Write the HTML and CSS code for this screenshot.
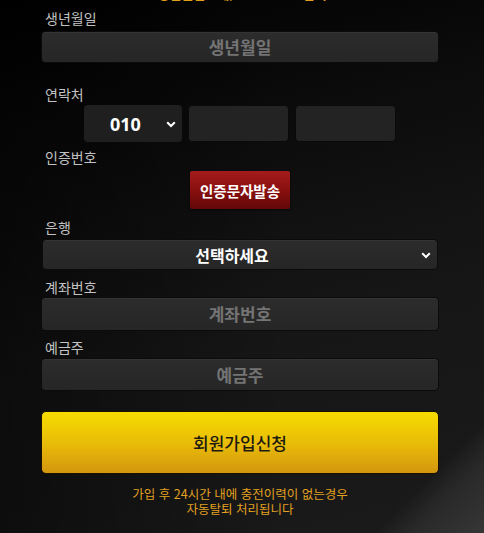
FILE: index.html
```html
<!DOCTYPE html>
<html lang="ko">
<head>
<meta charset="utf-8">
<title>회원가입</title>
<link rel="stylesheet" href="styles.css">
</head>
<body>
<div class="page">
  <p class="top-note">생년월일 - 예) 19900101 입력</p>
  <form class="form">
    <label class="label lb-birth">생년월일</label>
    <div class="field f-birth"><span class="ph">생년월일</span></div>

    <label class="label lb-phone">연락처</label>
    <div class="phone-row">
      <div class="phone-sel">
        <span class="sel-val">010</span>
        <svg class="chev" width="10" height="7" viewBox="0 0 10 7"><path d="M1.2 1.2 L5 5 L8.8 1.2" fill="none" stroke="#fff" stroke-width="2"/></svg>
      </div>
      <div class="phone-in"></div>
      <div class="phone-in"></div>
    </div>

    <label class="label lb-cert">인증번호</label>
    <button type="button" class="btn-red">인증문자발송</button>

    <label class="label lb-bank">은행</label>
    <div class="field f-bank">
      <span class="sel-text">선택하세요</span>
      <svg class="chev chev-bank" width="10" height="7" viewBox="0 0 10 7"><path d="M1.2 1.2 L5 5 L8.8 1.2" fill="none" stroke="#fff" stroke-width="2"/></svg>
    </div>

    <label class="label lb-acc">계좌번호</label>
    <div class="field f-acc"><span class="ph">계좌번호</span></div>

    <label class="label lb-owner">예금주</label>
    <div class="field f-owner"><span class="ph">예금주</span></div>

    <button type="button" class="btn-yellow">회원가입신청</button>

    <p class="notice"><span class="nl">가입 후 24시간 내에 충전이력이 없는경우</span><span class="nl">자동탈퇴 처리됩니다</span></p>
  </form>
</div>
</body>
</html>
```

FILE: styles.css
```css
* { box-sizing: border-box; }
html, body { margin: 0; padding: 0; }
body {
  width: 484px;
  height: 533px;
  overflow: hidden;
  font-family: "Noto Sans CJK KR", "Noto Sans", sans-serif;
  background:
    linear-gradient(135deg, rgba(255,255,255,0) 0%, rgba(255,255,255,0) 89%, rgba(255,255,255,0.07) 93%, rgba(255,255,255,0.12) 100%),
    linear-gradient(165deg, #000 0%, #0c0c0c 30%, #161616 60%, #1a1a1a 100%);
}
.page {
  width: 484px;
  height: 533px;
  overflow: hidden;
  background: linear-gradient(90deg, rgba(0,0,0,0.45) 0%, rgba(0,0,0,0) 60%);
}
.top-note {
  margin: -14px 0 0;
  text-align: center;
  color: #e0a01a;
  font-size: 13px;
  line-height: 16px;
  font-weight: 700;
}
.form {
  display: flex;
  flex-direction: column;
  padding: 0 45px 0 41px;
}
.label {
  display: block;
  padding-left: 4px;
  color: #c2c2c2;
  font-size: 14px;
  line-height: 20px;
}
.lb-birth { margin-top: 6px; }
.lb-phone { margin-top: 21px; }
.lb-cert { margin-top: 5px; }
.lb-bank { margin-top: 8px; }
.lb-acc { margin-top: 7px; }
.lb-owner { margin-top: 6px; }

.field {
  position: relative;
  width: 398px;
  display: flex;
  align-items: center;
  justify-content: center;
  background: linear-gradient(180deg, #2c2c2c 0%, #262626 100%);
  border: 1px solid #0b0b0b;
  border-radius: 4px;
  box-shadow: inset 0 1px 0 rgba(255,255,255,0.04);
}
.f-birth { height: 32px; margin-top: 3px; }
.f-bank { height: 31px; margin-top: 2px; width: 396px; margin-left: 1px; padding-right: 16px; }
.f-acc { height: 34px; margin-top: 0; }
.f-owner { height: 33px; margin-top: 1px; }

.ph {
  color: #747474;
  font-size: 17px;
  font-weight: 700;
  line-height: 20px;
}
.sel-text {
  color: #fff;
  font-size: 16px;
  font-weight: 700;
  line-height: 20px;
}
.chev-bank {
  position: absolute;
  right: 6px;
  top: 12px;
}

.phone-row {
  display: flex;
  gap: 6px;
  margin-top: 1px;
  margin-left: 43px;
  width: 312px;
}
.phone-sel {
  width: 98px;
  height: 37px;
  display: flex;
  align-items: center;
  padding-left: 26px;
  background: #1f1f1f;
  border-radius: 4px;
  position: relative;
}
.sel-val {
  color: #fff;
  font-family: "Noto Sans", "Open Sans", sans-serif;
  font-size: 18px;
  font-weight: 700;
}
.phone-sel .chev {
  position: absolute;
  right: 6px;
  top: 16px;
}
.phone-in {
  width: 101px;
  height: 37px;
  background: #232323;
  border: 1px solid #0a0a0a;
  border-radius: 4px;
}

.btn-red {
  align-self: flex-start;
  margin-top: 4px;
  margin-left: 149px;
  width: 100px;
  height: 38px;
  border: 0;
  border-radius: 2px;
  background: linear-gradient(180deg, #a51b1b 0%, #8a1010 50%, #640707 100%);
  color: #fff;
  font-family: "Noto Sans CJK KR", sans-serif;
  font-size: 14.5px;
  font-weight: 700;
  padding: 0;
  box-shadow: 0 1px 2px rgba(0,0,0,0.6);
}

.btn-yellow {
  margin-top: 20px;
  width: 398px;
  height: 63px;
  border: 1px solid #1a1200;
  border-radius: 5px;
  background: linear-gradient(180deg, #f6dc00 0%, #e9bd08 50%, #d4960f 100%);
  color: #1e1a10;
  font-family: "Noto Sans CJK KR", sans-serif;
  font-size: 17px;
  font-weight: 500;
  padding: 0;
}

.notice {
  margin: 12px 0 0;
  display: flex;
  flex-direction: column;
  align-items: center;
  color: #e2a020;
  font-size: 12.5px;
  line-height: 15px;
}
.nl {
  display: block;
  height: 15px;
  overflow: visible;
}
```
